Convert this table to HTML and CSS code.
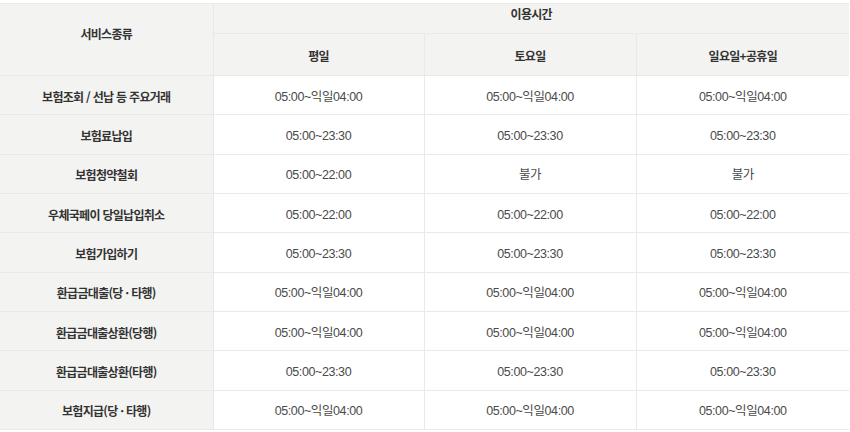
FILE: index.html
```html
<!DOCTYPE html>
<html lang="ko">
<head>
<meta charset="utf-8">
<title>서비스 이용시간</title>
<link rel="stylesheet" href="styles.css">
</head>
<body>
<div class="wrap">
<table class="time-table">
  <colgroup>
    <col class="c1"><col class="c2"><col class="c3"><col class="c4">
  </colgroup>
  <thead>
    <tr class="h1">
      <th rowspan="2" class="svc-head">서비스종류</th>
      <th colspan="3" class="use-head">이용시간</th>
    </tr>
    <tr class="h2">
      <th>평일</th>
      <th>토요일</th>
      <th>일요일+공휴일</th>
    </tr>
  </thead>
  <tbody>
    <tr><th>보험조회 / 선납 등 주요거래</th><td>05:00~익일04:00</td><td>05:00~익일04:00</td><td>05:00~익일04:00</td></tr>
    <tr><th>보험료납입</th><td>05:00~23:30</td><td>05:00~23:30</td><td>05:00~23:30</td></tr>
    <tr><th>보험청약철회</th><td>05:00~22:00</td><td>불가</td><td>불가</td></tr>
    <tr><th>우체국페이 당일납입취소</th><td>05:00~22:00</td><td>05:00~22:00</td><td>05:00~22:00</td></tr>
    <tr><th>보험가입하기</th><td>05:00~23:30</td><td>05:00~23:30</td><td>05:00~23:30</td></tr>
    <tr><th>환급금대출(당 · 타행)</th><td>05:00~익일04:00</td><td>05:00~익일04:00</td><td>05:00~익일04:00</td></tr>
    <tr><th>환급금대출상환(당행)</th><td>05:00~익일04:00</td><td>05:00~익일04:00</td><td>05:00~익일04:00</td></tr>
    <tr><th>환급금대출상환(타행)</th><td>05:00~23:30</td><td>05:00~23:30</td><td>05:00~23:30</td></tr>
    <tr><th>보험지급(당 · 타행)</th><td>05:00~익일04:00</td><td>05:00~익일04:00</td><td>05:00~익일04:00</td></tr>
  </tbody>
</table>
</div>
</body>
</html>
```
FILE: styles.css
```css
html, body {
  margin: 0;
  padding: 0;
  background: #ffffff;
}
body {
  font-family: "Noto Sans CJK KR", "Noto Sans", sans-serif;
  font-size: 12px;
  color: #444;
}
.wrap {
  padding-top: 3px;
  width: 850px;
}
.time-table {
  width: 849px;
  border-collapse: collapse;
  table-layout: fixed;
  border-top: 1px solid #ececec;
  border-bottom: 1px solid #dcdcdc;
}
.c1 { width: 213px; }
.c2 { width: 211px; }
.c3 { width: 212px; }
.c4 { width: 213px; }
.time-table th,
.time-table td {
  padding: 0;
  text-align: center;
  vertical-align: middle;
  border: 1px solid #e9e9e9;
  line-height: 16px;
}
.time-table tr > :first-child { border-left: none; }
.time-table tr > :last-child { border-right: none; }
.time-table th {
  background: #f3f3f1;
  color: #333;
  font-weight: 700;
  letter-spacing: -0.7px;
}
.time-table td {
  background: #fff;
  color: #4a4a4a;
  font-weight: 400;
  font-family: "Liberation Sans", "Noto Sans CJK KR", sans-serif;
  font-size: 12.5px;
  letter-spacing: -0.4px;
}
.time-table tbody th,
.time-table tbody td {
  padding-top: 3px;
}
.h1 { height: 30px; }
.use-head { padding-bottom: 10px !important; }
.svc-head { padding-bottom: 12px !important; }
.h2 { height: 42px; }
.h2 th { padding-top: 2px; }
tbody tr { height: 39.33px; }
```
